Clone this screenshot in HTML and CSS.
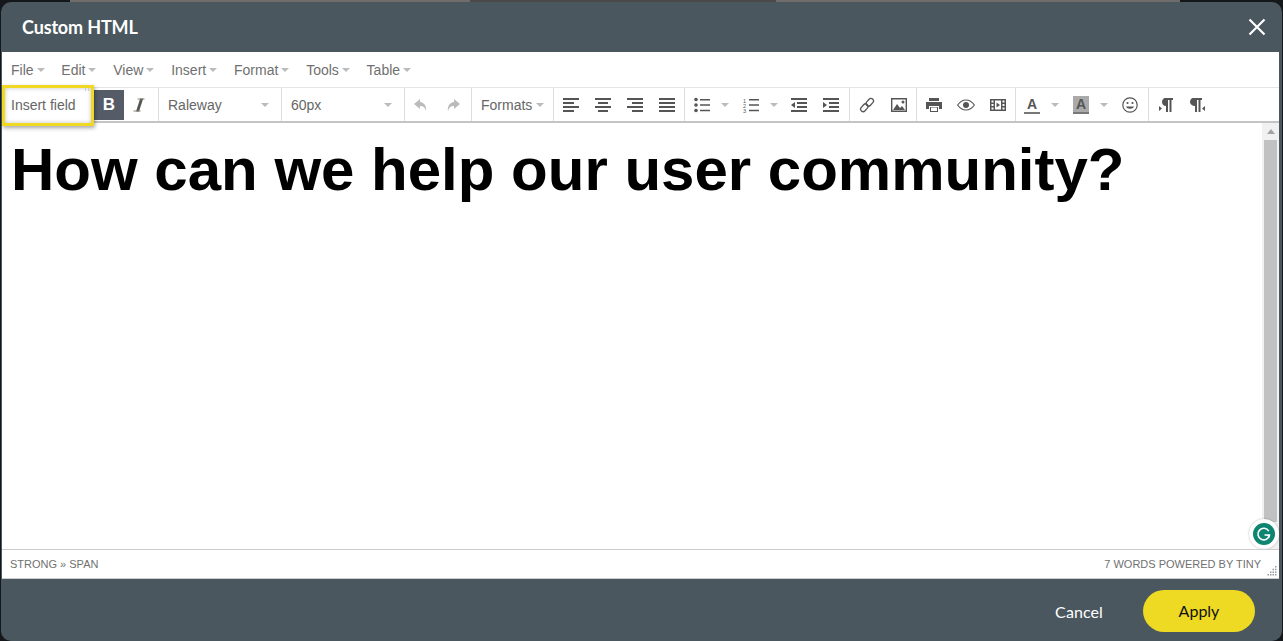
FILE: index.html
```html
<!DOCTYPE html>
<html lang="en">
<head>
  <meta charset="UTF-8" />
  <title>Custom HTML</title>
  <link rel="stylesheet" href="styles.css">
</head>
<body>
  <div class="backdrop">
    <span class="strip strip-a"></span>
    <span class="strip strip-b"></span>
    <span class="strip strip-c"></span>
    <span class="strip strip-b strip-wide"></span>
  </div>
  <div class="modal">
    <div class="modal-head">
      <h2>Custom HTML</h2>
      <svg class="close" width="18" height="18" viewBox="0 0 18 18"><path d="M1.5 1.5l15 15M16.5 1.5l-15 15" stroke="#fff" stroke-width="2.2" fill="none"/></svg>
    </div>

    <div class="editor">
      <div class="menubar">
        <span class="menu">File<i class="caret"></i></span>
        <span class="menu">Edit<i class="caret"></i></span>
        <span class="menu">View<i class="caret"></i></span>
        <span class="menu">Insert<i class="caret"></i></span>
        <span class="menu">Format<i class="caret"></i></span>
        <span class="menu">Tools<i class="caret"></i></span>
        <span class="menu">Table<i class="caret"></i></span>
      </div>

      <div class="toolbar">
        <div class="insert-field">Insert field<i class="grip"></i></div>
        <div class="group group-style">
          <span class="btn btn-bold">B</span>
          <span class="btn btn-italic">
            <svg width="16" height="16" viewBox="0 0 16 16"><path d="M5 14.5L9.2 1.5h3L8 14.5z" fill="#555"/><path d="M6.5 2h7M2.5 14h7" stroke="#8a8074" stroke-width="1"/></svg>
          </span>
        </div>
        <div class="group select select-font">Raleway<i class="caret"></i></div>
        <div class="group select select-size">60px<i class="caret"></i></div>
        <div class="group group-history">
          <span class="btn"><svg width="16" height="16" viewBox="0 0 16 16"><path d="M7 2L1 7l6 5V9c3 0 5 1 6 5 .8-5-2-8.500-6-9z" fill="#bbb"/></svg></span>
          <span class="btn"><svg width="16" height="16" viewBox="0 0 16 16"><path d="M9 2l6 5-6 5V9c-3 0-5 1-6 5C2.200 9 5 5.500 9 5z" fill="#bbb"/></svg></span>
        </div>
        <div class="group select select-formats">Formats<i class="caret"></i></div>
        <div class="group group-align">
          <span class="btn"><svg width="16" height="14" viewBox="0 0 16 14"><path d="M0 0h16v2H0zM0 4h11v2H0zM0 8h16v2H0zM0 12h11v2H0z" fill="#555"/></svg></span>
          <span class="btn"><svg width="16" height="14" viewBox="0 0 16 14"><path d="M0 0h16v2H0zM3 4h10v2H3zM0 8h16v2H0zM3 12h10v2H3z" fill="#555"/></svg></span>
          <span class="btn"><svg width="16" height="14" viewBox="0 0 16 14"><path d="M0 0h16v2H0zM5 4h11v2H5zM0 8h16v2H0zM5 12h11v2H5z" fill="#555"/></svg></span>
          <span class="btn"><svg width="16" height="14" viewBox="0 0 16 14"><path d="M0 0h16v2H0zM0 4h16v2H0zM0 8h16v2H0zM0 12h16v2H0z" fill="#555"/></svg></span>
        </div>
        <div class="group group-lists">
          <span class="btn btn-split"><svg width="16" height="16" viewBox="0 0 16 16"><circle cx="2" cy="2.500" r="1.800" fill="#555"/><circle cx="2" cy="8" r="1.800" fill="#555"/><circle cx="2" cy="13.500" r="1.800" fill="#555"/><path d="M6 2h10v1.500H6zM6 7.300h10v1.500H6zM6 12.800h10v1.500H6z" fill="#555"/></svg><i class="caret"></i></span>
          <span class="btn btn-split"><svg width="16" height="16" viewBox="0 0 16 16"><text x="0" y="5.500" class="num">1</text><text x="0" y="10.800" class="num">2</text><text x="0" y="16" class="num">3</text><path d="M6 2h10v1.500H6zM6 7.300h10v1.500H6zM6 12.800h10v1.500H6z" fill="#555"/></svg><i class="caret"></i></span>
          <span class="btn"><svg width="16" height="14" viewBox="0 0 16 14"><path d="M0 0h16v2H0zM6 4h10v2H6zM6 8h10v2H6zM0 12h16v2H0zM4 4v6L0 7z" fill="#555"/></svg></span>
          <span class="btn"><svg width="16" height="14" viewBox="0 0 16 14"><path d="M0 0h16v2H0zM6 4h10v2H6zM6 8h10v2H6zM0 12h16v2H0zM0 4v6l4-3z" fill="#555"/></svg></span>
        </div>
        <div class="group group-insert">
          <span class="btn"><svg width="16" height="16" viewBox="0 0 16 16"><g fill="none" stroke="#555" stroke-width="1.300"><rect x="8.300" y="1" width="5" height="8.500" rx="2.500" transform="rotate(42 10.800 5.200)"/><rect x="2.800" y="6.500" width="5" height="8.500" rx="2.500" transform="rotate(42 5.300 10.800)"/></g></svg></span>
          <span class="btn"><svg width="16" height="14" viewBox="0 0 16 14"><path d="M.7.700h14.600v12.600H.7z" fill="#fff" stroke="#555" stroke-width="1.400"/><path d="M2 12l4-6 3 4 2-2 3 4z" fill="#555"/><circle cx="12" cy="4" r="1.500" fill="#555"/></svg></span>
        </div>
        <div class="group group-tools">
          <span class="btn"><svg width="16" height="16" viewBox="0 0 16 16"><path d="M3 1h10v3H3zM0 5h16v7h-3V9H3v3H0z" fill="#555"/><path d="M4 10h8v5H4z" fill="#555"/><path d="M5 10.500h6v3.500H5z" fill="#fff"/></svg></span>
          <span class="btn"><svg width="18" height="12" viewBox="0 0 18 12"><path d="M.6 6C3.500 2 6 1 9 1s5.500 1 8.400 5C14.500 10 12 11 9 11S3.500 10 .6 6z" fill="none" stroke="#555" stroke-width="1.100"/><circle cx="9" cy="6" r="3" fill="#555"/></svg></span>
          <span class="btn"><svg width="16" height="14" viewBox="0 0 16 14"><path fill-rule="evenodd" d="M0 1h16v12H0zM1.500 2.500v2h2v-2zM1.500 6v2h2V6zM1.500 9.500v2h2v-2zM12.500 2.500v2h2v-2zM12.500 6v2h2V6zM12.500 9.500v2h2v-2zM5 2.500v9h6v-9z" fill="#555"/><path d="M6.500 4.500L10 7l-3.500 2.500z" fill="#555"/></svg></span>
        </div>
        <div class="group group-color">
          <span class="btn btn-split"><span class="color-a">A</span><i class="caret"></i></span>
          <span class="btn btn-split"><span class="color-a color-back">A</span><i class="caret"></i></span>
          <span class="btn"><svg width="16" height="16" viewBox="0 0 16 16"><circle cx="8" cy="8" r="7.200" fill="none" stroke="#555" stroke-width="1.200"/><circle cx="5.500" cy="6" r="1.100" fill="#555"/><circle cx="10.500" cy="6" r="1.100" fill="#555"/><path d="M4 9.500c1 3 7 3 8 0z" fill="#555"/></svg></span>
        </div>
        <div class="group group-dir">
          <span class="btn"><svg width="16" height="16" viewBox="0 0 16 16"><path d="M7 1h8v2h-1.500v12h-2V3H10v12H8V9C5.500 9 4 7 4 5s1.500-4 3-4z" fill="#555"/><path d="M1 9v5l3-2.500z" fill="#555"/></svg></span>
          <span class="btn"><svg width="16" height="16" viewBox="0 0 16 16"><path d="M3 1h9v2h-1.500v12h-2V3H7v12H5V9C2.500 9 0 7 0 5s1.500-4 3-4z" fill="#555"/><path d="M15 9v5l-3-2.500z" fill="#555"/></svg></span>
        </div>
      </div>

      <div class="content">
        <h1>How can we help our user community?</h1>
        <div class="scrollbar">
          <i class="scroll-up"></i>
          <div class="scroll-thumb"></div>
        </div>
        <div class="grammarly">
          <svg width="22" height="22" viewBox="0 0 22 22"><circle cx="11" cy="11" r="11" fill="#0d8571"/><path d="M15.800 8.200A5.800 5.800 0 1 0 16.500 12H11.500" fill="none" stroke="#fff" stroke-width="1.600"/><path d="M16.500 15l-3-3h3z" fill="#fff"/></svg>
        </div>
      </div>

      <div class="statusbar">
        <span>STRONG » SPAN</span>
        <span class="status-right">7 WORDS POWERED BY TINY</span>
        <svg class="resize" width="10" height="10" viewBox="0 0 10 10"><path d="M8 0h1.500v1.500H8zM5.500 2.800H7v1.500H5.500zM8 2.800h1.500v1.500H8zM3 5.500h1.500V7H3zM5.500 5.500H7V7H5.500zM8 5.500h1.500V7H8zM.5 8H2v1.500H.5zM3 8h1.500v1.500H3zM5.500 8H7v1.500H5.500zM8 8h1.500v1.500H8z" fill="#999"/></svg>
      </div>
    </div>

    <div class="modal-foot">
      <span class="cancel">Cancel</span>
      <span class="apply">Apply</span>
    </div>
  </div>
</body>
</html>
```

FILE: styles.css
```css
html, body {
  margin: 0;
  padding: 0;
  height: 100%;
  overflow: hidden;
  background: #14181b;
}

.backdrop {
  display: flex;
  height: 2px;
}

.strip {
  display: block;
  height: 2px;
}

.strip-a {
  width: 70px;
  background: #14181b;
}

.strip-b {
  width: 400px;
  background: #6f6c69;
}

.strip-c {
  width: 306px;
  background: #4a4848;
}

.strip-wide {
  width: 404px;
}

.modal {
  height: 639px;
  margin: 0 1px;
  display: flex;
  flex-direction: column;
  background: #4a575e;
  border-radius: 10px;
  overflow: hidden;
  font-family: "Liberation Sans", Arial, sans-serif;
}

.modal-head {
  height: 50px;
  flex: none;
  display: flex;
  align-items: center;
  justify-content: space-between;
  padding: 0 16px 0 21px;
}

.modal-head h2 {
  margin: 0;
  font-family: Lato, sans-serif;
  font-size: 18px;
  font-weight: 700;
  letter-spacing: -.15px;
  color: #fff;
}

.editor {
  flex: none;
  height: 527px;
  margin: 0 3px 0 1px;
  display: flex;
  flex-direction: column;
  background: #fff;
  border-bottom: 1px solid #ccc;
  box-sizing: border-box;
}

.menubar {
  height: 35px;
  flex: none;
  display: flex;
  align-items: center;
  gap: 16.8px;
  padding-left: 9px;
  font-size: 14px;
  color: #707070;
}

.menu {
  display: flex;
  align-items: center;
  gap: 3px;
}

.caret {
  display: inline-block;
  width: 0;
  height: 0;
  border-left: 4px solid transparent;
  border-right: 4px solid transparent;
  border-top: 4px solid #bbb;
}

.toolbar {
  height: 36px;
  flex: none;
  display: flex;
  box-sizing: border-box;
  border-top: 1px solid #e4e4e4;
  border-bottom: 2px solid #c4c4c4;
  font-size: 14px;
  color: #666;
}

.insert-field {
  width: 92px;
  height: 41px;
  margin-top: -3px;
  padding-left: 6px;
  box-sizing: border-box;
  border: 3px solid #efd923;
  box-shadow: 1px 2px 4px rgba(0, 0, 0, .35), inset 0 0 4px rgba(0, 0, 0, .25);
  line-height: 35px;
  background: #fff;
  position: relative;
  z-index: 1;
}

.grip {
  position: absolute;
  top: 0;
  right: 2px;
  width: 2px;
  height: 3px;
  border-left: 1px solid #ccc;
  border-right: 1px solid #ccc;
}

.group {
  display: flex;
  align-items: center;
  height: 100%;
  box-sizing: border-box;
  border-right: 1px solid #dcdcdc;
}

.btn {
  display: flex;
  align-items: center;
  justify-content: center;
  flex: none;
  width: 32px;
  height: 30px;
}

.group-style {
  width: 65px;
}

.group-style .btn {
  width: 30px;
}

.btn-bold {
  background: #555c68;
  color: #fff;
  font-weight: 700;
  font-size: 17px;
}

.select {
  justify-content: space-between;
  padding: 0 12px 0 9px;
}

.select-font,
.select-size {
  width: 123px;
}

.group-history {
  width: 67px;
}

.select-formats {
  width: 82px;
  padding-right: 9px;
}

.group-align {
  width: 131px;
  padding-left: 1px;
}

.group-lists {
  width: 165px;
}

.btn-split {
  width: 49px;
  box-sizing: border-box;
  justify-content: flex-start;
  gap: 11px;
  padding-left: 8px;
}

.group-lists .btn-split {
  padding-left: 9px;
}

.num {
  font-size: 5.500px;
  fill: #555;
}

.group-insert {
  width: 67px;
  padding-left: 1px;
}

.group-tools {
  width: 99px;
  padding-left: 1px;
}

.group-color {
  width: 133px;
}

.color-a {
  display: block;
  width: 16px;
  height: 16px;
  border-bottom: 2px solid #777;
  text-align: center;
  line-height: 16px;
  font-weight: 700;
  font-size: 14px;
  color: #555;
}

.color-back {
  background: #aaa;
}

.group-dir {
  padding-left: 1px;
  border-right: none;
}

.content {
  flex: 1;
  position: relative;
  overflow: hidden;
}

.content h1 {
  margin: 12px 0 0 9px;
  font-size: 60px;
  line-height: 69px;
  font-weight: 700;
  color: #000;
}

.scrollbar {
  position: absolute;
  top: 0;
  right: 0;
  bottom: 0;
  width: 17px;
  background: #f1f1f1;
}

.scroll-up {
  display: block;
  width: 0;
  height: 0;
  margin: 6px auto 0;
  border-left: 4px solid transparent;
  border-right: 4px solid transparent;
  border-bottom: 5px solid #a3a3a3;
}

.scroll-thumb {
  height: 382px;
  margin: 6px 2px 0 2px;
  background: #c1c1c1;
}

.grammarly {
  position: absolute;
  right: 0;
  bottom: 0;
  width: 30px;
  height: 30px;
  border-radius: 50%;
  background: #fff;
  display: flex;
  align-items: center;
  justify-content: center;
  box-shadow: 0 0 2px rgba(0, 0, 0, .3);
}

.statusbar {
  height: 29px;
  flex: none;
  display: flex;
  align-items: center;
  justify-content: space-between;
  position: relative;
  box-sizing: border-box;
  border-top: 1px solid #ccc;
  padding: 0 18px 0 8px;
  font-size: 11px;
  color: #707070;
}

.resize {
  position: absolute;
  right: 2px;
  bottom: 2px;
}

.modal-foot {
  flex: 1;
  display: flex;
  align-items: center;
  justify-content: flex-end;
  gap: 40px;
  padding: 2px 27px 0 0;
  font-family: Lato, sans-serif;
  font-size: 16px;
}

.cancel {
  color: #fff;
  letter-spacing: .1px;
}

.apply {
  width: 112px;
  height: 42px;
  line-height: 42px;
  text-align: center;
  border-radius: 21px;
  background: #eed923;
  color: #111;
}
```
